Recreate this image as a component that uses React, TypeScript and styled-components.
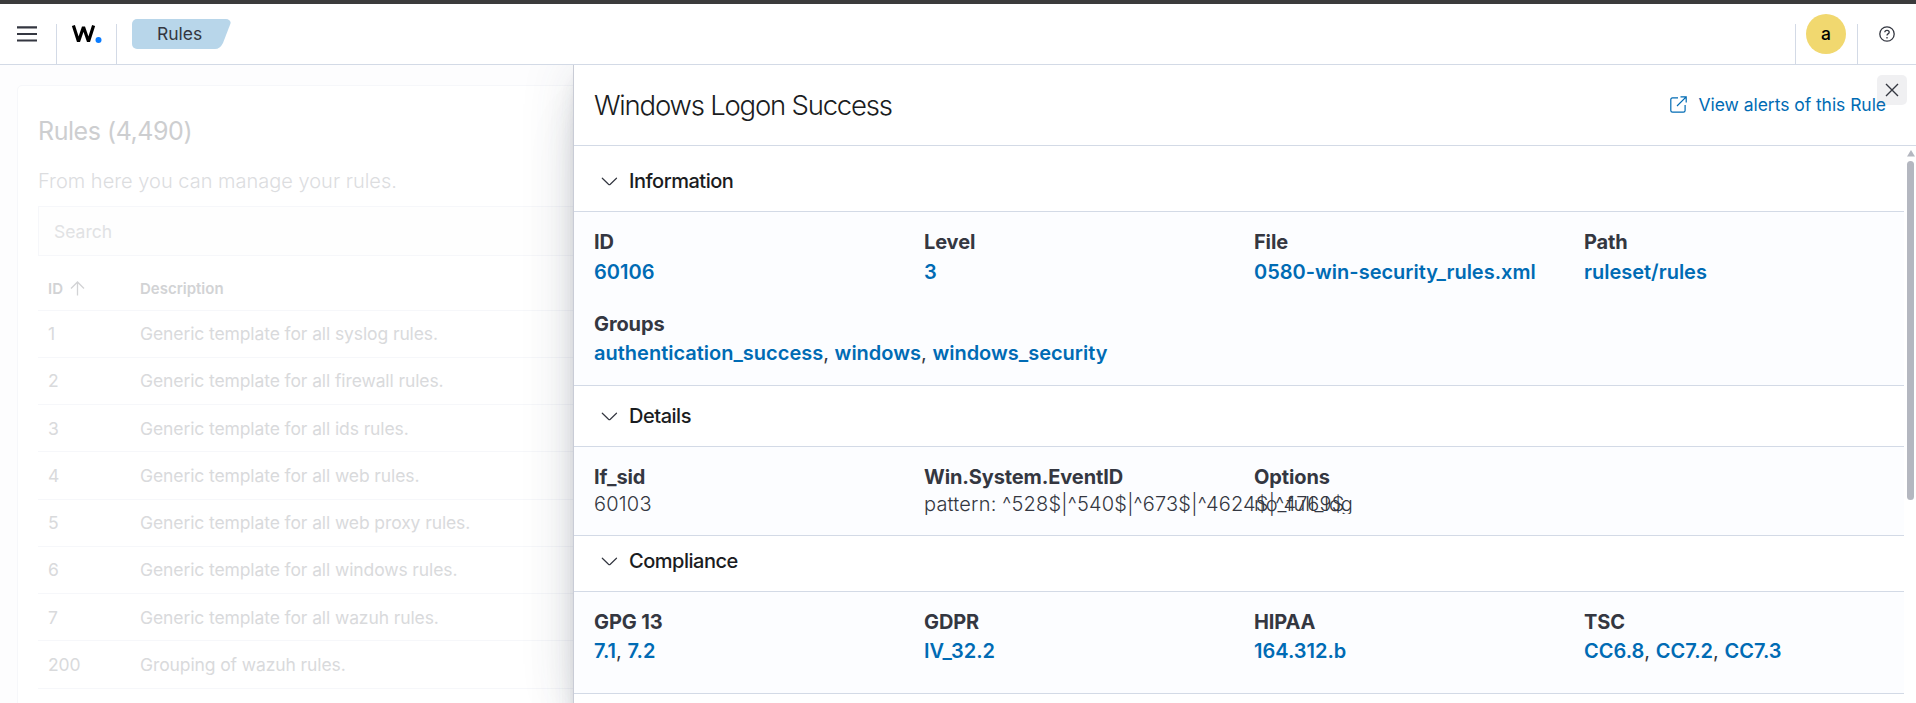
import React from "react";
import styled, { createGlobalStyle } from "styled-components";

const Global = createGlobalStyle`
  * { box-sizing: border-box; }
  html, body { margin: 0; height: 100%; overflow: hidden; background: #fff; }
  body { font-family: Inter, "Liberation Sans", sans-serif; font-size: 20px; color: #343741; font-weight: 400; }
`;

const Shell = styled.div`
  position: relative;
  display: flex;
  flex-direction: column;
  height: 703px;
  overflow: hidden;
  border-top: 4px solid #3b3b3c;
`;
const Header = styled.header`
  position: relative;
  z-index: 2;
  display: flex;
  align-items: center;
  flex: none;
  height: 61px;
  border-bottom: 1px solid #d3dae6;
  background: #fff;
`;
const HeaderCell = styled.div<{ $w: number; $line?: boolean }>`
  display: flex;
  align-items: center;
  justify-content: center;
  width: ${(p) => p.$w}px;
  height: 60px;
  background: ${(p) => (p.$line ? "linear-gradient(#d3dae6, #d3dae6) right bottom / 1px 40px no-repeat" : "none")};
`;
const Spacer = styled.div`flex: 1;`;
const Crumb = styled.a`
  display: flex;
  align-items: center;
  height: 30px;
  width: 99px;
  margin-left: 15px;
  padding-left: 25px;
  font-size: 17.5px;
  line-height: 30px;
  color: #343741;
  border-radius: 5px;
  background: #b8d6ea;
  clip-path: path("M0 0H96Q100 0 98.700 4L91 24Q88 30 83 30H0Z");
`;
const Avatar = styled.div`
  width: 40px;
  height: 40px;
  margin-right: 2px;
  border-radius: 50%;
  background: #f1d86f;
  color: #000;
  font-size: 17.5px;
  font-weight: 500;
  line-height: 40px;
  text-align: center;
`;

const Page = styled.main`
  flex: 1;
  min-height: 0;
  padding: 20px 0 0 17px;
  background: #fdfdfe;
  overflow: hidden;
`;
const Panel = styled.section`
  width: 1880px;
  height: 700px;
  padding: 0 20px;
  border: 1px solid #f6f7fa;
  border-radius: 5px;
  background: #fff;
`;
const PageTitle = styled.h2`
  margin: 0;
  padding-top: 30px;
  font-size: 25px;
  line-height: 31px;
  font-weight: 400;
  letter-spacing: -0.018em;
  color: #cdced0;
`;
const Lead = styled.p`
  margin: 19px 0 0;
  font-weight: 300;
  line-height: 30px;
  color: #dcdddf;
`;
const Search = styled.div`
  height: 50px;
  margin-top: 10px;
  padding-left: 15px;
  border: 1px solid #f6f7fa;
  background: #fefefe;
  font-size: 17.5px;
  line-height: 50px;
  color: #e1e2e4;
`;
const Row = styled.div<{ $head?: boolean }>`
  display: grid;
  grid-template-columns: 92px 1fr;
  align-items: center;
  height: ${(p) => (p.$head ? 54.5 : 47.25)}px;
  padding: ${(p) => (p.$head ? "11px 0 0 10px" : "0 0 0 10px")};
  border-bottom: 1px solid #f6f7fa;
  font-size: ${(p) => (p.$head ? 15 : 17.5)}px;
  font-weight: ${(p) => (p.$head ? 600 : 400)};
  letter-spacing: ${(p) => (p.$head ? "0" : "-0.006em")};
  color: ${(p) => (p.$head ? "#d2d3d5" : "#d9dadc")};
`;
const HeadCell = styled.span`
  display: flex;
  align-items: center;
  gap: 7px;
`;

const Flyout = styled.aside`
  position: absolute;
  top: 61px;
  left: 573px;
  right: 0;
  bottom: 0;
  display: flex;
  flex-direction: column;
  border-left: 1px solid #c9ccd6;
  background: #fff;
  box-shadow: 0 50px 50px -5px rgba(65, 78, 101, 0.1), 0 30px 30px -5px rgba(65, 78, 101, 0.1),
    0 15px 15px -3px rgba(65, 78, 101, 0.1), 0 5px 5px -2px rgba(65, 78, 101, 0.1), -2px 0 50px rgba(60, 64, 80, 0.12);
`;
const FlyoutHeader = styled.div`
  display: flex;
  align-items: center;
  justify-content: space-between;
  flex: none;
  height: 81px;
  padding: 0 30px 0 20px;
  border-bottom: 1px solid #d3dae6;
`;
const Title = styled.h2`
  margin: 0;
  font-size: 27.5px;
  line-height: 40px;
  font-weight: 300;
  letter-spacing: -0.044em;
  color: #1a1c21;
`;
const AlertsLink = styled.a`
  display: flex;
  align-items: center;
  gap: 12px;
  padding-bottom: 1px;
  font-size: 17.5px;
  letter-spacing: -0.003em;
  color: #006bb4;
`;
const Close = styled.button`
  position: absolute;
  top: 10px;
  right: 9px;
  display: flex;
  align-items: center;
  justify-content: center;
  width: 30px;
  height: 30px;
  padding: 0;
  border: 0;
  border-radius: 5px;
  background: rgba(105, 112, 125, 0.1);
`;
const Body = styled.div`
  display: flex;
  flex: 1;
  min-height: 0;
`;
const Sections = styled.div`
  flex: 1;
  min-width: 0;
`;
const SectionHead = styled.div<{ $h: number; $top: number }>`
  display: flex;
  align-items: flex-start;
  gap: 11px;
  height: ${(p) => p.$h}px;
  padding: ${(p) => p.$top}px 0 0 27px;
  border-bottom: 1px solid #d3dae6;
  line-height: 30px;
  font-weight: 450;
  letter-spacing: -0.024em;
  color: #1a1c21;
  svg { margin-top: 7px; }
`;
const Facts = styled.div<{ $h: number }>`
  display: grid;
  grid-template-columns: repeat(4, 330px);
  align-content: start;
  row-gap: 21.5px;
  height: ${(p) => p.$h}px;
  padding: 15px 0 0 20px;
  border-bottom: 1px solid #d3dae6;
  background: #fcfdff;
`;
const Fact = styled.div<{ $wide?: boolean }>`
  grid-column: ${(p) => (p.$wide ? "1 / -1" : "auto")};
  min-width: 0;
  white-space: nowrap;
`;
const Label = styled.div`
  line-height: 30px;
  font-weight: 700;
  letter-spacing: -0.006em;
`;
const Value = styled.div<{ $line: number; $plain?: boolean; $clip?: boolean }>`
  line-height: ${(p) => p.$line}px;
  font-weight: ${(p) => (p.$plain ? 300 : 400)};
  letter-spacing: ${(p) => (p.$plain && !p.$clip ? "0.01em" : "0")};
  clip-path: ${(p) => (p.$clip ? "inset(0 0 2px 0)" : "none")};
`;
const Link = styled.a`
  font-weight: 600;
  color: #006bb4;
`;
const Scrollbar = styled.div`
  display: flex;
  flex-direction: column;
  align-items: center;
  width: 12px;
  padding: 4px 0 0 1px;
  background: #fff;
`;
const Thumb = styled.div`
  width: 7px;
  height: 339px;
  margin-top: 4px;
  border-radius: 4px;
  background: #b4b7c0;
`;
const MenuIcon = styled.svg`
  margin-right: 3px;
`;

const Chevron = () => (
  <svg width="17" height="17" viewBox="0 0 17 17" fill="none" stroke="#343741" strokeWidth="1.2" strokeLinecap="round" strokeLinejoin="round">
    <path d="M1.300 5.200L7.500 11.200Q8.400 12 9.300 11.200L15.500 5.200" />
  </svg>
);

const Links = ({ items }: { items: string[] }) => (
  <>
    {items.map((t, i) => (
      <React.Fragment key={t}>
        {i > 0 && ", "}
        <Link>{t}</Link>
      </React.Fragment>
    ))}
  </>
);

type FactData = { label: string; links?: string[]; text?: string; wide?: boolean; clip?: boolean };
type SectionData = { title: string; headH: number; top: number; bodyH: number; line: number; facts: FactData[] };

const sections: SectionData[] = [
  {
    title: "Information", headH: 66, top: 20, bodyH: 174, line: 30,
    facts: [
      { label: "ID", links: ["60106"] },
      { label: "Level", links: ["3"] },
      { label: "File", links: ["0580-win-security_rules.xml"] },
      { label: "Path", links: ["ruleset/rules"] },
      { label: "Groups", links: ["authentication_success", "windows", "windows_security"], wide: true },
    ],
  },
  {
    title: "Details", headH: 61, top: 15, bodyH: 89, line: 24,
    facts: [
      { label: "If_sid", text: "60103" },
      { label: "Win.System.EventID", text: "pattern: ^528$|^540$|^673$|^4624$|^4769$" },
      { label: "Options", text: "no_full_log", clip: true },
    ],
  },
  {
    title: "Compliance", headH: 56, top: 10, bodyH: 102, line: 29,
    facts: [
      { label: "GPG 13", links: ["7.1", "7.2"] },
      { label: "GDPR", links: ["IV_32.2"] },
      { label: "HIPAA", links: ["164.312.b"] },
      { label: "TSC", links: ["CC6.8", "CC7.2", "CC7.3"] },
    ],
  },
];

const rules: [string, string][] = [
  ["1", "Generic template for all syslog rules."],
  ["2", "Generic template for all firewall rules."],
  ["3", "Generic template for all ids rules."],
  ["4", "Generic template for all web rules."],
  ["5", "Generic template for all web proxy rules."],
  ["6", "Generic template for all windows rules."],
  ["7", "Generic template for all wazuh rules."],
  ["200", "Grouping of wazuh rules."],
];

export default function App() {
  return (
    <>
      <Global />
      <Shell>
        <Header>
          <HeaderCell $w={57} $line>
            <MenuIcon width="20" height="16" viewBox="0 0 20 16" fill="#343741">
              <path d="M0 0.300h20v2.200H0zM0 6.900h20v2.200H0zM0 13.400h20v2.200H0z" />
            </MenuIcon>
          </HeaderCell>
          <HeaderCell $w={60} $line>
            <svg width="32" height="20" viewBox="0.8 0 32 20">
              <path d="M3.200 1.500L8.300 17.500L13.300 3L18.300 17.500L23.400 1.500" fill="none" stroke="#000" strokeWidth="3.200" strokeLinejoin="bevel" />
              <circle cx="28.300" cy="16" r="3" fill="#0a7cff" />
            </svg>
          </HeaderCell>
          <Crumb>Rules</Crumb>
          <Spacer />
          <HeaderCell $w={1} $line />
          <HeaderCell $w={62} $line>
            <Avatar>a</Avatar>
          </HeaderCell>
          <HeaderCell $w={58}>
            <svg width="16" height="16" viewBox="0 0 16 16" fill="none" stroke="#343741" strokeWidth="1.300">
              <circle cx="8" cy="8" r="7.200" />
              <path d="M5.800 6.300Q5.900 4.300 8 4.300Q10.200 4.300 10.200 6.200Q10.200 7.200 9 7.900Q8 8.500 8 9.600" />
              <path d="M8 11v1.500" />
            </svg>
          </HeaderCell>
        </Header>
        <Page>
          <Panel>
            <PageTitle>Rules (4,490)</PageTitle>
            <Lead>From here you can manage your rules.</Lead>
            <Search>Search</Search>
            <Row $head>
              <HeadCell>
                ID
                <svg width="15" height="15" viewBox="0 0 15 15" fill="none" stroke="#d2d3d5" strokeWidth="1.300">
                  <path d="M1 7.500L7.500 1L14 7.500M7.500 1V14.500" />
                </svg>
              </HeadCell>
              <span>Description</span>
            </Row>
            {rules.map(([id, text]) => (
              <Row key={id}>
                <span>{id}</span>
                <span>{text}</span>
              </Row>
            ))}
          </Panel>
        </Page>
        <Flyout>
          <FlyoutHeader>
            <Title>Windows Logon Success</Title>
            <AlertsLink>
              <svg width="17" height="17" viewBox="0 0 17 17" fill="none" stroke="#006bb4" strokeWidth="1.200">
                <path d="M8 1.900H2.500Q0.800 1.900 0.800 3.600V14.400Q0.800 16.100 2.500 16.100H13.400Q15.100 16.100 15.100 14.400V9M10.500 0.800H16.200V6.500M16.200 0.800L7 10" />
              </svg>
              View alerts of this Rule
            </AlertsLink>
          </FlyoutHeader>
          <Close aria-label="Close">
            <svg width="14" height="14" viewBox="0 0 14 14" stroke="#343741" strokeWidth="1.400">
              <path d="M1 1L13 13M13 1L1 13" />
            </svg>
          </Close>
          <Body>
            <Sections>
              {sections.map((s) => (
                <React.Fragment key={s.title}>
                  <SectionHead $h={s.headH} $top={s.top}>
                    <Chevron />
                    {s.title}
                  </SectionHead>
                  <Facts $h={s.bodyH}>
                    {s.facts.map((f) => (
                      <Fact key={f.label} $wide={f.wide}>
                        <Label>{f.label}</Label>
                        <Value $line={f.wide ? 29 : s.line} $plain={!f.links} $clip={f.clip}>
                          {f.links ? <Links items={f.links} /> : f.text}
                        </Value>
                      </Fact>
                    ))}
                  </Facts>
                </React.Fragment>
              ))}
            </Sections>
            <Scrollbar>
              <svg width="8" height="7" viewBox="0 0 8 7" fill="#b4b7c0">
                <path d="M4 0L8 6.500H0Z" />
              </svg>
              <Thumb />
            </Scrollbar>
          </Body>
        </Flyout>
      </Shell>
    </>
  );
}
